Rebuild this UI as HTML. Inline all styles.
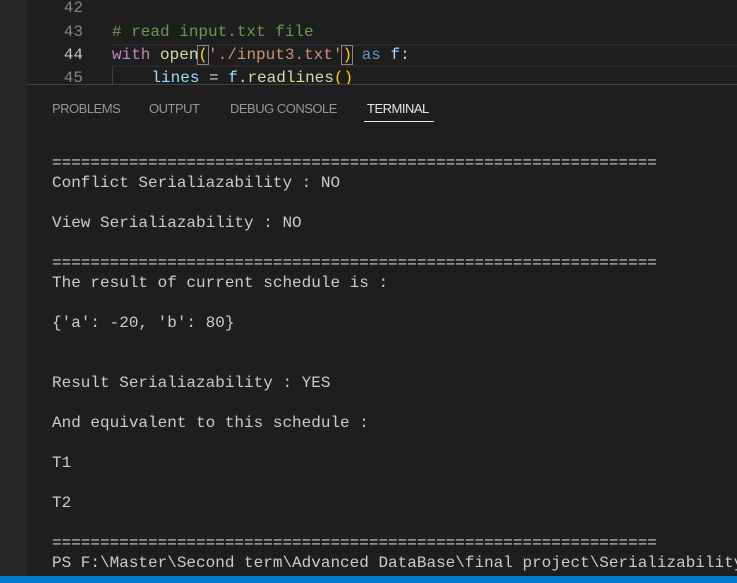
<!DOCTYPE html>
<html><head><meta charset="utf-8"><style>
*{margin:0;padding:0;box-sizing:border-box}
body{width:737px;height:583px;background:#1e1e1e;overflow:hidden;position:relative;font-family:"Liberation Mono",monospace}
.side{position:absolute;left:0;top:0;width:27px;height:576px;background:#252526}
.code{position:absolute;left:27px;top:1px;right:0;height:83px;overflow:hidden}
.ln{position:absolute;left:0;width:56px;text-align:right;font-size:16px;color:#858585;height:23px;line-height:23px}
.cl{position:absolute;left:85px;font-size:16px;white-space:pre;height:23px;line-height:23px;color:#d4d4d4}
.cur{position:absolute;left:84px;right:0;top:43px;height:23px;border-top:2px solid #282828;border-bottom:2px solid #282828}
.panel{position:absolute;left:27px;top:84px;right:0;bottom:7px;border-top:1px solid #414141}
.tabs{position:absolute;top:16px;left:25px;font-family:"Liberation Sans",sans-serif;font-size:13px;color:#969696}
.tabs span{position:absolute;white-space:nowrap;letter-spacing:-0.5px}
.term{position:absolute;left:52px;top:153px;font-size:16px;line-height:20px;color:#cccccc;white-space:pre}
.status{position:absolute;left:0;bottom:0;width:737px;height:7px;background:#007acc}
</style></head><body>
<div class="side"></div>
<div class="code">
<div class="cur"></div>
<div class="ln" style="top:-4px">42</div>
<div class="ln" style="top:20px">43</div>
<div class="ln" style="top:43px;color:#c6c6c6">44</div>
<div class="ln" style="top:66px">45</div>
<div class="cl" style="top:20px;color:#6a9955"># read input.txt file</div>
<div class="cl" style="top:43px"><span style="color:#c586c0">with</span> <span style="color:#dcdcaa">open</span><span style="color:#ffd700;outline:1px solid #888">(</span><span style="color:#ce9178">'./input3.txt'</span><span style="color:#ffd700;outline:1px solid #888">)</span> <span style="color:#569cd6">as</span> <span style="color:#9cdcfe">f</span>:</div>
<div class="cl" style="top:66px;border-left:1px solid #404040">    <span style="color:#9cdcfe">lines</span> = <span style="color:#9cdcfe">f</span>.<span style="color:#dcdcaa">readlines</span><span style="color:#ffd700">()</span></div>
</div>
<div class="panel">
<div class="tabs">
<span style="left:0">PROBLEMS</span>
<span style="left:97px">OUTPUT</span>
<span style="left:178px">DEBUG CONSOLE</span>
<span style="left:315px;color:#e7e7e7">TERMINAL</span>
<span style="left:312px;top:20px;width:70px;height:1px;background:#e7e7e7"></span>
</div>
</div>
<div class="term">===============================================================
Conflict Serialiazability : NO

View Serialiazability : NO

===============================================================
The result of current schedule is :

{'a': -20, 'b': 80}


Result Serialiazability : YES

And equivalent to this schedule :

T1

T2

===============================================================
PS F:\Master\Second term\Advanced DataBase\final project\Serializability&gt;</div>
<div class="status"></div>
</body></html>
